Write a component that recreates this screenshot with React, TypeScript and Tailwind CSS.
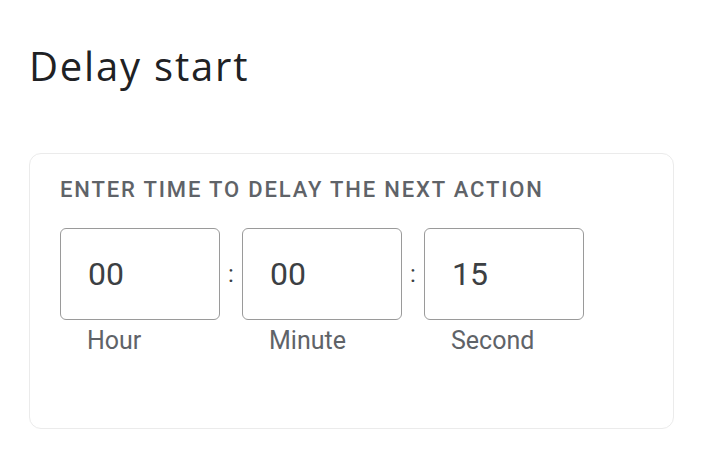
const fields = [
  { value: "00", label: "Hour" },
  { value: "00", label: "Minute" },
  { value: "15", label: "Second" },
];

export default function App() {
  return (
    <div className="h-[459px] w-[702px] bg-white font-['Roboto',sans-serif]">
      <div className="px-[29px] pt-[38px]">
        {/* Title */}
        <h1 className="font-['Open_Sans',sans-serif] text-[40px] leading-[56px] text-[#202124] tracking-[1.8px]">
          Delay start
        </h1>

        {/* Card */}
        <div className="mt-[59px] h-[276px] w-[645px] rounded-[12px] border border-[#ebebeb] px-[30px] pt-[23px]">
          <div className="text-[22px] leading-[26px] font-medium tracking-[1.85px] text-[#5f6368]">
            ENTER TIME TO DELAY THE NEXT ACTION
          </div>

          <div className="mt-[25px] flex items-start">
            {fields.map((f, i) => (
              <div key={f.label} className="flex items-start">
                {i > 0 && (
                  <div className="flex h-[92px] w-[22px] items-center justify-center text-[24px] text-[#3c4043]">
                    :
                  </div>
                )}
                <div className="flex flex-col">
                  <div className="flex h-[92px] w-[160px] items-center rounded-[6px] border-[1.5px] border-[#9a9a9a] pl-[27px] text-[32px] text-[#3c4043]">
                    {f.value}
                  </div>
                  <div className="mt-[5px] pl-[27px] text-[25px] leading-[32px] text-[#5f6368]">
                    {f.label}
                  </div>
                </div>
              </div>
            ))}
          </div>
        </div>
      </div>
    </div>
  );
}
